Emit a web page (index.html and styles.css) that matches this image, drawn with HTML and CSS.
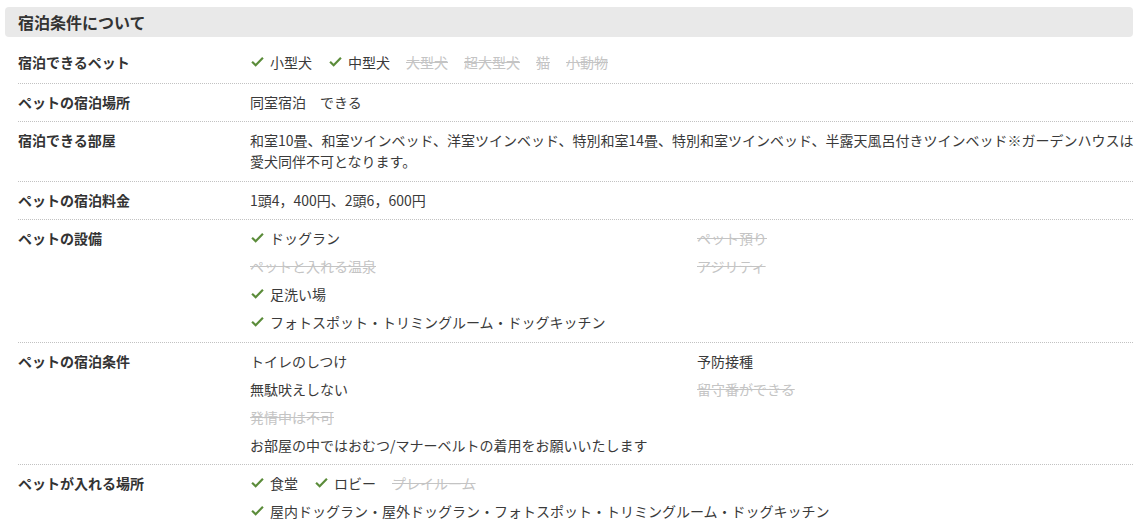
FILE: index.html
```html
<!DOCTYPE html>
<html lang="ja">
<head>
<meta charset="utf-8">
<link rel="stylesheet" href="styles.css">
</head>
<body>
<section class="wrap">
  <h2 class="head">宿泊条件について</h2>
  <dl class="table">
    <div class="row first">
      <dt>宿泊できるペット</dt>
      <dd class="inline">
        <span class="ok"><svg class="chk" viewBox="0 0 12 10"><path d="M1 5.2 L4.3 8.5 L11 1.5"/></svg>小型犬</span>
        <span class="ok"><svg class="chk" viewBox="0 0 12 10"><path d="M1 5.2 L4.3 8.5 L11 1.5"/></svg>中型犬</span>
        <span class="ng">大型犬</span>
        <span class="ng">超大型犬</span>
        <span class="ng">猫</span>
        <span class="ng">小動物</span>
      </dd>
    </div>
    <div class="row">
      <dt>ペットの宿泊場所</dt>
      <dd>同室宿泊　できる</dd>
    </div>
    <div class="row">
      <dt>宿泊できる部屋</dt>
      <dd>和室10畳、和室ツインベッド、洋室ツインベッド、特別和室14畳、特別和室ツインベッド、半露天風呂付きツインベッド※ガーデンハウスは愛犬同伴不可となります。</dd>
    </div>
    <div class="row">
      <dt>ペットの宿泊料金</dt>
      <dd>1頭4，400円、2頭6，600円</dd>
    </div>
    <div class="row">
      <dt>ペットの設備</dt>
      <dd class="stack">
        <div class="grid">
          <span class="ok"><svg class="chk" viewBox="0 0 12 10"><path d="M1 5.2 L4.3 8.5 L11 1.5"/></svg>ドッグラン</span>
          <span class="ng">ペット預り</span>
          <span class="ng">ペットと入れる温泉</span>
          <span class="ng">アジリティ</span>
          <span class="ok"><svg class="chk" viewBox="0 0 12 10"><path d="M1 5.2 L4.3 8.5 L11 1.5"/></svg>足洗い場</span>
        </div>
        <span class="ok"><svg class="chk" viewBox="0 0 12 10"><path d="M1 5.2 L4.3 8.5 L11 1.5"/></svg>フォトスポット・トリミングルーム・ドッグキッチン</span>
      </dd>
    </div>
    <div class="row">
      <dt>ペットの宿泊条件</dt>
      <dd class="stack">
        <div class="grid">
          <span>トイレのしつけ</span>
          <span>予防接種</span>
          <span>無駄吠えしない</span>
          <span class="ng">留守番ができる</span>
          <span class="ng">発情中は不可</span>
        </div>
        <span>お部屋の中ではおむつ/マナーベルトの着用をお願いいたします</span>
      </dd>
    </div>
    <div class="row last">
      <dt>ペットが入れる場所</dt>
      <dd class="stack">
        <div class="inline">
          <span class="ok"><svg class="chk" viewBox="0 0 12 10"><path d="M1 5.2 L4.3 8.5 L11 1.5"/></svg>食堂</span>
          <span class="ok"><svg class="chk" viewBox="0 0 12 10"><path d="M1 5.2 L4.3 8.5 L11 1.5"/></svg>ロビー</span>
          <span class="ng">プレイルーム</span>
        </div>
        <span class="ok"><svg class="chk" viewBox="0 0 12 10"><path d="M1 5.2 L4.3 8.5 L11 1.5"/></svg>屋内ドッグラン・屋外ドッグラン・フォトスポット・トリミングルーム・ドッグキッチン</span>
      </dd>
    </div>
  </dl>
</section>
</body>
</html>
```

FILE: styles.css
```css
* { box-sizing: border-box; }
html, body {
  margin: 0;
  padding: 0;
  background: #fff;
}
body {
  font-family: "Noto Sans CJK JP", "Noto Sans", sans-serif;
  font-size: 14px;
  line-height: 21px;
  color: #333;
}
.wrap {
  padding: 7px 15px 0 5px;
}
.head {
  margin: 0;
  height: 30px;
  line-height: 30px;
  padding-left: 13px;
  background: #e9e9e9;
  border-radius: 4px;
  font-size: 16px;
  font-weight: bold;
  color: #333;
}
.table {
  margin: 6px 0 0 13px;
}
.row {
  display: flex;
  padding: 8px 0 8.5px;
  border-bottom: 1px dotted #c2c2c2;
}
.row.first {
  padding: 9px 0 9.5px;
}
.row.last {
  border-bottom: none;
}
dt {
  width: 232px;
  flex: none;
  font-weight: bold;
  color: #333;
}
dd {
  margin: 0;
  flex: 1;
  color: #3a3a3a;
  margin-right: -8px;
}
.inline {
  display: flex;
  flex-wrap: wrap;
  gap: 0 16px;
}
.stack {
  display: flex;
  flex-direction: column;
  gap: 7px;
}
.grid {
  display: grid;
  grid-template-columns: 447px 1fr;
  row-gap: 7px;
}
.ok {
  display: inline-flex;
  align-items: center;
  color: #3a3a3a;
}
.chk {
  width: 13px;
  height: 11px;
  margin: 0 6px 2px 1px;
  fill: none;
  stroke: #5b8c3a;
  stroke-width: 2;
  stroke-linecap: butt;
}
.ng {
  color: #c4c4c4;
  text-decoration: line-through;
}
```
